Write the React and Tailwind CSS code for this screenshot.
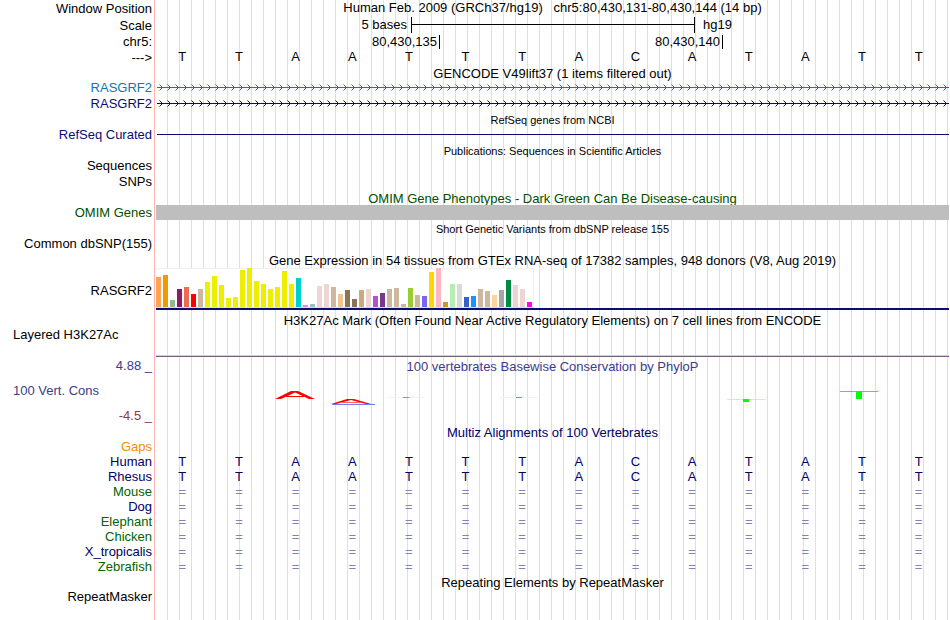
import { Fragment } from 'react';

const BASES = 'TTAATTTACATATT'.split('');

const SPECIES = [
  { name: 'Human', color: 'text-[#000064]', aligned: true },
  { name: 'Rhesus', color: 'text-[#000064]', aligned: true },
  { name: 'Mouse', color: 'text-[#006400]' },
  { name: 'Dog', color: 'text-[#000064]' },
  { name: 'Elephant', color: 'text-[#006400]' },
  { name: 'Chicken', color: 'text-[#006400]' },
  { name: 'X_tropicalis', color: 'text-[#000064]' },
  { name: 'Zebrafish', color: 'text-[#006400]' },
];

// GTEx tissues in display order: [height, tissue color]
const TISSUES = [
  [30, '#ffa54f'], [32, '#ee9a00'], [7, '#8fbc8f'], [18, '#8b1c62'], [20, '#ee6a50'], [13, '#ff0000'],
  [18, '#cdb79e'], [25, '#eeee00'], [31, '#eeee00'], [22, '#eeee00'], [9, '#eeee00'], [10, '#eeee00'],
  [37, '#eeee00'], [39, '#eeee00'], [26, '#eeee00'], [23, '#eeee00'], [18, '#eeee00'], [20, '#eeee00'],
  [36, '#eeee00'], [23, '#eeee00'], [29, '#00cdcd'], [2, '#ee82ee'], [3, '#9ac0cd'], [21, '#eed5d2'],
  [23, '#eed5d2'], [20, '#cdb79e'], [13, '#eec591'], [17, '#8b7355'], [8, '#8b7355'], [17, '#cdaa7d'],
  [18, '#eed5d2'], [11, '#b452cd'], [14, '#7a378b'], [18, '#cdb79e'], [19, '#cdb79e'], [3, '#cdb79e'],
  [19, '#9acd32'], [12, '#cdb79e'], [11, '#7a67ee'], [35, '#ffd700'], [39, '#ffb6c1'], [5, '#cd9b1d'],
  [23, '#b4eeb4'], [23, '#d9d9d9'], [10, '#3a5fcd'], [11, '#1e90ff'], [18, '#cdb79e'], [16, '#cdb79e'],
  [12, '#ffd39b'], [17, '#a6a6a6'], [27, '#008b45'], [22, '#eed5d2'], [18, '#eed5d2'], [5, '#ff00ff'],
];

// One line of the browser: label column on the left, gridded track on the right
const Row = ({ label, color = 'text-black', height = 'h-4', labelClass = 'justify-end items-center', children }) => (
  <div className={`grid grid-cols-[154px_1fr] ${height}`}>
    <div className={`flex min-h-0 whitespace-nowrap pr-0.5 ${labelClass} ${color}`}>{label}</div>
    <div className="min-h-0 min-w-0 border-l border-[#ffb4b4] pl-px">
      <div className="h-full bg-[repeating-linear-gradient(to_right,transparent_0_11px,#dcdcf5_11px_12px)]">
        {children}
      </div>
    </div>
  </div>
);

const TitleRow = ({ children, color = 'text-black', small = false }) => (
  <Row height="h-[15px]">
    <h2 className={`whitespace-pre text-center leading-[14px] ${small ? 'pt-px text-[11px]' : 'pt-0.5 text-[13px]'} ${color}`}>
      {children}
    </h2>
  </Row>
);

const Letters = ({ letters, color = 'text-black' }) => (
  <div className={`grid h-full grid-cols-14 items-center text-center ${color}`}>
    {letters.map((letter, i) => (
      <span key={i} className="pr-1">{letter}</span>
    ))}
  </div>
);

const GeneLine = ({ id, stroke }) => (
  <svg className="block h-4 w-full" shapeRendering="crispEdges">
    <defs>
      <pattern id={id} x="1" width="8" height="16" patternUnits="userSpaceOnUse">
        <path d="M3 5h1v1h-1zM4 6h1v1h-1zM4 8h1v1h-1zM3 9h1v1h-1z" fill={stroke} />
        <path d="M2 4h1v1h-1zM2 10h1v1h-1z" fill={stroke} opacity="0.5" />
      </pattern>
    </defs>
    <rect x="1" y="7" width="100%" height="1" fill={stroke} />
    <rect x="1" width="100%" height="16" fill={`url(#${id})`} />
  </svg>
);

const ScaleBar = () => (
  <div className="grid h-full grid-cols-[255px_284px_1fr]">
    <span className="pr-1 text-right">5 bases</span>
    <div className="border-x border-black pt-[7px]">
      <div className="h-px bg-black" />
    </div>
    <span className="pl-2">hg19</span>
  </div>
);

const Ruler = () => (
  <div className="grid h-full grid-cols-[284px_283px] items-end">
    {['80,430,135', '80,430,140'].map((pos) => (
      <span key={pos} className="h-[14px] border-r border-black pr-0.5 text-right leading-[14px]">{pos}</span>
    ))}
  </div>
);

const ConservationLogo = () => (
  <svg className="block h-[50px] w-full" viewBox="156 374 793 50" preserveAspectRatio="none">
    {/* positive scores are squashed letters */}
    <path d="M275 399L291 391H298L315 399H309L295 392.5L281 399Z" fill="#ff0000" />
    <path d="M286 396.5H304" stroke="#ff0000" />
    <path d="M331 404L347 399H354L371 404H366L351 400L336 404Z" fill="#ff0000" />
    <path d="M340 402.5H361" stroke="#ff6464" />
    <path d="M332 404.5H375" stroke="#7878ff" />
    {/* negative scores hang below the axis */}
    <g shapeRendering="crispEdges">
      <path d="M387 397h38v1h-38zM500 397h38v1h-38z" fill="#e6fae6" />
      <path d="M403 397h6v1h-6zM516 397h6v1h-6z" fill="#1ee61e" />
      <path d="M727 399h38v1h-38z" fill="#b4ffb4" />
      <path d="M743 399h6v3h-6z" fill="#00ff00" />
      <path d="M840 391h38v1h-38z" fill="#32f032" />
      <path d="M856 391h6v8h-6z" fill="#00ff00" />
    </g>
  </svg>
);

export default function App() {
  return (
    <main className="min-h-screen overflow-hidden bg-white pr-px font-['Liberation_Sans',Arial,sans-serif] text-[13px] leading-4 text-black">
      <Row label="Window Position" height="h-[17px]">
        <h1 className="whitespace-pre text-center">
          {'Human Feb. 2009 (GRCh37/hg19)   chr5:80,430,131-80,430,144 (14 bp)'}
        </h1>
      </Row>
      <Row label="Scale" labelClass="justify-end items-center pt-0.5"><ScaleBar /></Row>
      <Row label="chr5:" labelClass="justify-end items-center pt-0.5"><Ruler /></Row>
      <Row label="--->" labelClass="justify-end items-center pt-0.5"><Letters letters={BASES} /></Row>

      {/* Genes */}
      <TitleRow>GENCODE V49lift37 (1 items filtered out)</TitleRow>
      <Row label="RASGRF2" color="text-[#0c78b4]"><GeneLine id="gene-a" stroke="#0c78b4" /></Row>
      <Row label="RASGRF2" color="text-[#0c0c78]"><GeneLine id="gene-b" stroke="#0c0c78" /></Row>
      <TitleRow small>RefSeq genes from NCBI</TitleRow>
      <Row label="RefSeq Curated" color="text-[#0c0c78]">
        <div className="pt-[7px] pl-px"><div className="h-px bg-[#0c0c78]" /></div>
      </Row>

      {/* Literature and phenotypes */}
      <TitleRow small>Publications: Sequences in Scientific Articles</TitleRow>
      <Row label="Sequences" />
      <Row label="SNPs" />
      <TitleRow color="text-[#005000]">OMIM Gene Phenotypes - Dark Green Can Be Disease-causing</TitleRow>
      <Row label="OMIM Genes" color="text-[#005000]">
        <div className="relative h-[15px] bg-[#bebebe]" />
      </Row>
      <TitleRow small>Short Genetic Variants from dbSNP release 155</TitleRow>
      <Row label="Common dbSNP(155)" />

      {/* Expression */}
      <TitleRow>Gene Expression in 54 tissues from GTEx RNA-seq of 17382 samples, 948 donors (V8, Aug 2019)</TitleRow>
      <Row label="RASGRF2" height="h-[45px]" labelClass="justify-end items-center pt-0.5">
        <div className="pt-px">
          <div className="flex h-10 w-[378px] items-end gap-0.5 border-b border-[#dcdcdc] bg-white shadow-[inset_0_1px_#f0f0f0,inset_-1px_0_#f0f0f0]">
            {TISSUES.map(([value, color], i) => (
              <div key={i} className="w-[5px]" style={{ height: value, backgroundColor: color }} />
            ))}
          </div>
          <div className="h-0.5 bg-[#0c0c78]" />
        </div>
      </Row>
      <TitleRow>H3K27Ac Mark (Often Found Near Active Regulatory Elements) on 7 cell lines from ENCODE</TitleRow>
      <Row label="Layered H3K27Ac" height="h-[31px]" labelClass="pl-[13px] items-start">
        <div className="pt-7">
          <div className="h-px bg-[#f5cd82]" />
          <div className="h-px bg-[#785f78]" />
        </div>
      </Row>

      {/* Conservation */}
      <Row
        height="h-[66px]"
        color="text-[#3c3c8c]"
        labelClass="flex-col justify-between"
        label={
          <Fragment>
            <span className="text-right">4.88 _</span>
            <span className="pl-[13px]">100 Vert. Cons</span>
            <span className="text-right text-[#8c3c3c]">-4.5 _</span>
          </Fragment>
        }
      >
        <h2 className="h-4 pt-px text-center text-[#3c3c8c]">100 vertebrates Basewise Conservation by PhyloP</h2>
        <ConservationLogo />
      </Row>
      <TitleRow color="text-[#000064]">Multiz Alignments of 100 Vertebrates</TitleRow>
      <Row label="Gaps" color="text-[#f08c0a]" height="h-[15px]" />
      {SPECIES.map(({ name, color, aligned }) => (
        <Row key={name} label={name} color={color} height="h-[15px]">
          <Letters
            letters={aligned ? BASES : BASES.map(() => '=')}
            color={aligned ? 'text-[#000064]' : 'text-[#8282b4]'}
          />
        </Row>
      ))}

      {/* Repeats */}
      <TitleRow>Repeating Elements by RepeatMasker</TitleRow>
      <Row label="RepeatMasker" height="h-[31px]" labelClass="justify-end items-start" />
    </main>
  );
}
